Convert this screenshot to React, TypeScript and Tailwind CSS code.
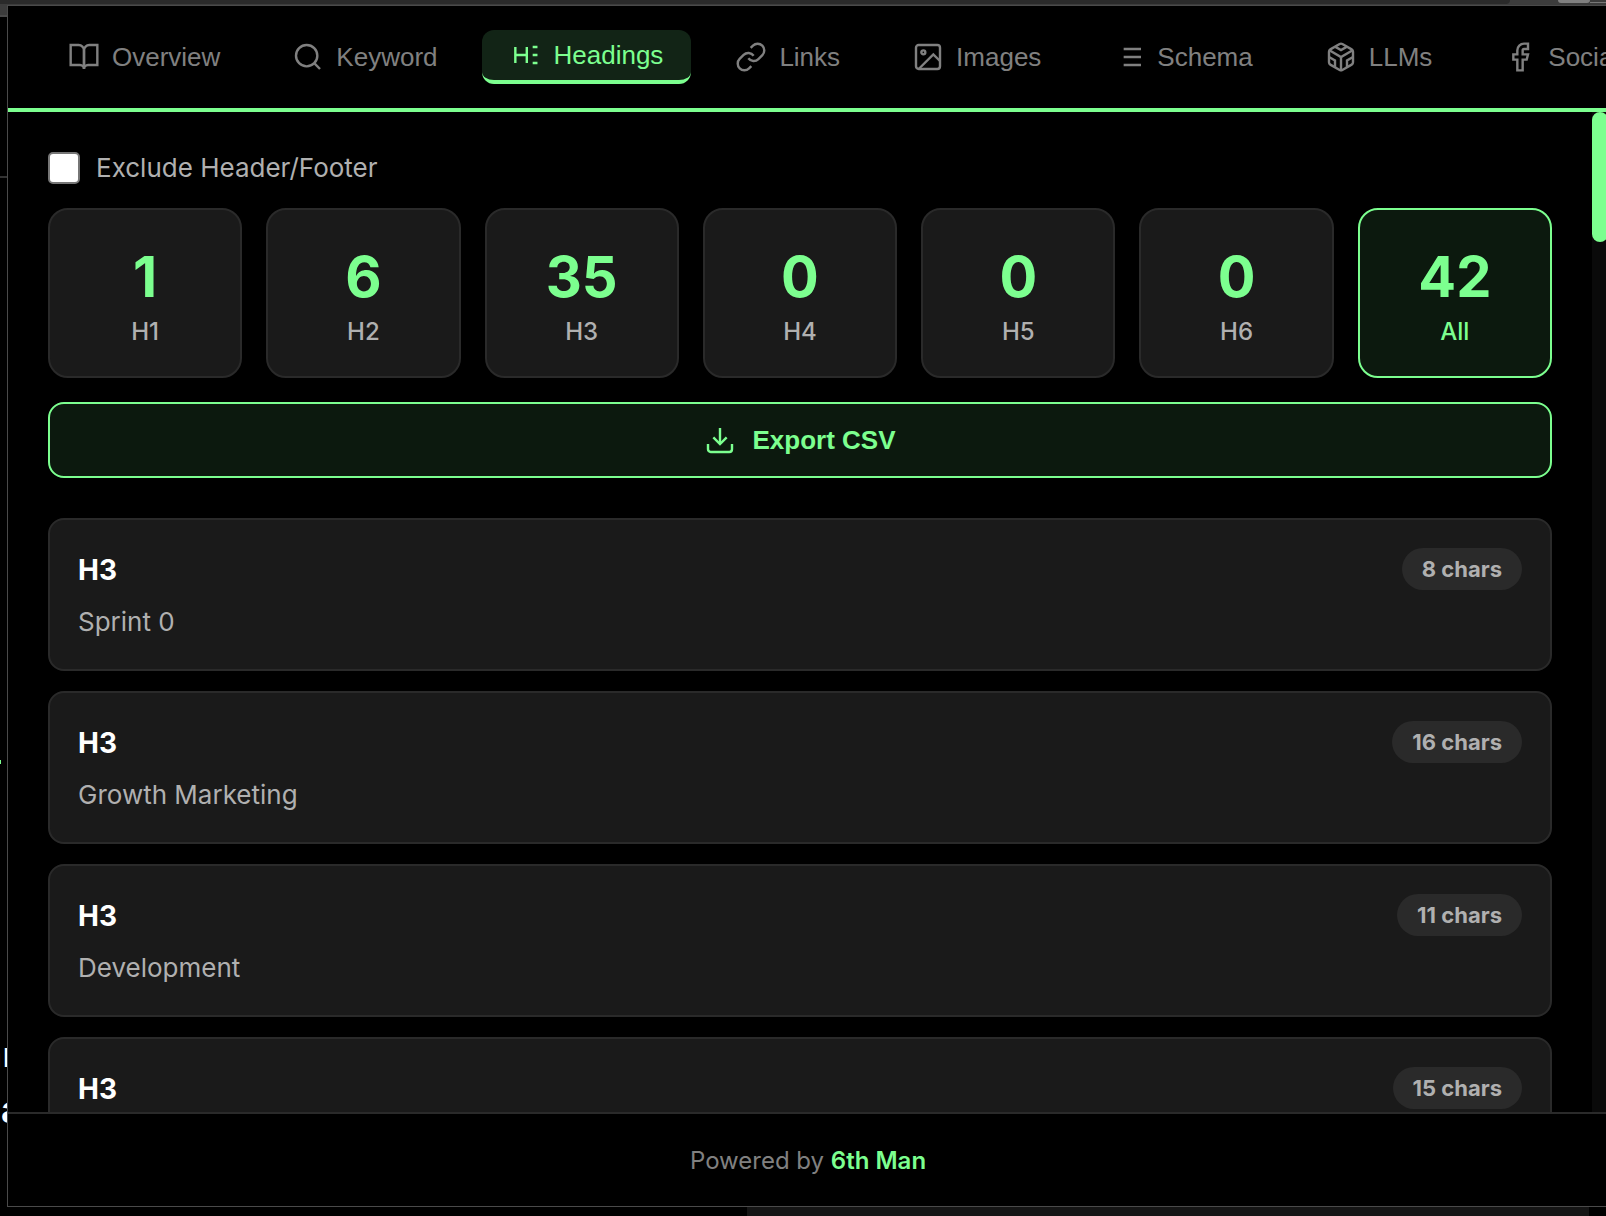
import type { ReactNode } from 'react';
import {
  FiBookOpen,
  FiCodesandbox,
  FiDownload,
  FiFacebook,
  FiImage,
  FiLink,
  FiSearch,
} from 'react-icons/fi';

const iconProps = {
  size: 32,
  strokeWidth: 1.8,
  strokeLinecap: 'butt',
  strokeLinejoin: 'miter',
  'aria-hidden': true,
  className: 'shrink-0',
} as const;

function HeadingIcon() {
  return (
    <svg width="32" height="32" viewBox="0 0 24 24" fill="none" stroke="currentColor" className="shrink-0" aria-hidden="true">
      <path strokeWidth="1.8" d="M4 6v12M12.6 6v12M4 12h8.6" />
      <path strokeWidth="2" d="M17 6h3.6M17 12h3.6M17 18h3.6" />
    </svg>
  );
}

function SchemaIcon() {
  return (
    <svg width="32" height="32" viewBox="0 0 24 24" fill="none" stroke="currentColor" strokeWidth="2" className="shrink-0" aria-hidden="true">
      <path d="M8 6h13M8 12h13M8 18h13" />
    </svg>
  );
}

const tabs: { label: string; icon: ReactNode; active?: boolean }[] = [
  { label: 'Overview', icon: <FiBookOpen {...iconProps} /> },
  { label: 'Keyword', icon: <FiSearch {...iconProps} /> },
  { label: 'Headings', icon: <HeadingIcon />, active: true },
  { label: 'Links', icon: <FiLink {...iconProps} /> },
  { label: 'Images', icon: <FiImage {...iconProps} /> },
  { label: 'Schema', icon: <SchemaIcon /> },
  { label: 'LLMs', icon: <FiCodesandbox {...iconProps} /> },
  { label: 'Social', icon: <FiFacebook {...iconProps} /> },
];

const counts = [
  { label: 'H1', value: 1 },
  { label: 'H2', value: 6 },
  { label: 'H3', value: 35 },
  { label: 'H4', value: 0 },
  { label: 'H5', value: 0 },
  { label: 'H6', value: 0 },
  { label: 'All', value: 42, active: true },
];

const headings = [
  { level: 'H3', text: 'Sprint 0', chars: 8 },
  { level: 'H3', text: 'Growth Marketing', chars: 16 },
  { level: 'H3', text: 'Development', chars: 11 },
  { level: 'H3', text: 'Product Strategy', chars: 15 },
];

function Tabs() {
  return (
    <nav className="flex h-[106px] shrink-0 items-start gap-4 overflow-hidden border-b-4 border-[#7cff8f] px-8 pt-6">
      {tabs.map((tab) => (
        <button
          key={tab.label}
          type="button"
          className={`flex h-[54px] shrink-0 items-center gap-3 rounded-xl px-7 font-['Liberation_Sans',Arial,sans-serif] text-[26px] leading-8 ${
            tab.active ? 'border-b-4 border-[#7cff8f] bg-[#122416] text-[#7cff8f]' : 'text-[#808080]'
          }`}
        >
          {tab.icon}
          {tab.label}
        </button>
      ))}
    </nav>
  );
}

function CountCards() {
  return (
    <div className="mt-6 grid grid-cols-7 gap-6">
      {counts.map((count) => (
        <button
          key={count.label}
          type="button"
          className={`flex flex-col items-center rounded-[20px] border-2 pt-8 pb-7 ${
            count.active ? 'border-[#7cff8f] bg-[#0c190e]' : 'border-[#2a2a2a] bg-[#1a1a1a]'
          }`}
        >
          <span className="text-[56px] leading-[70px] font-bold text-[#7cff8f]">{count.value}</span>
          <span
            className={`mt-1 text-2xl leading-8 font-medium ${
              count.active ? 'text-[#7cff8f]' : 'text-[#b0b0b0]'
            }`}
          >
            {count.label}
          </span>
        </button>
      ))}
    </div>
  );
}

function HeadingList() {
  return (
    <ul className="mt-10 flex flex-col gap-5">
      {headings.map((heading) => (
        <li key={heading.text} className="rounded-2xl border-2 border-[#2a2a2a] bg-[#1a1a1a] p-7">
          <div className="flex items-start justify-between">
            <span className="text-[28px] leading-[44px] font-bold text-white">{heading.level}</span>
            <span className="rounded-full bg-[#2a2a2a] px-5 text-[22px] leading-[42px] font-bold text-[#b0b0b0]">
              {heading.chars} chars
            </span>
          </div>
          <p className="mt-2.5 text-[26px] leading-[39px] text-[#b0b0b0]">{heading.text}</p>
        </li>
      ))}
    </ul>
  );
}

export default function App() {
  return (
    <div className="flex h-screen flex-col overflow-hidden bg-black font-[Inter,sans-serif]">
      {/* browser chrome above the popup */}
      <div className="flex h-[5px] shrink-0 items-start bg-[#3c3c3c]">
        <div className="h-1 w-[94%] rounded-br-full bg-[#2a2a2a]"></div>
        <div className="ml-12 h-[3px] w-8 rounded-b-full bg-[#808080]"></div>
        <div className="h-[3px] grow border-b border-[#777]"></div>
      </div>

      <div className="flex min-h-0 grow">
        {/* sliver of the page behind the popup */}
        <div className="relative w-[7px] shrink-0 overflow-hidden text-white" aria-hidden="true">
          <div className="h-3 border-b-2 border-[#4a4a4a] bg-[#3c3c3c]"></div>
          <div className="mt-[159px] h-0.5 bg-[#333]"></div>
          <span className="absolute top-[755px] left-0 h-1 w-px bg-[#7cff8f]"></span>
          <span className="absolute top-[1030px] -right-2 text-[34px] leading-10">ar</span>
          <span className="absolute top-[1084px] -right-4 text-[38px] leading-10 font-bold">a</span>
        </div>

        <div className="-mr-0.5 flex min-w-0 grow flex-col border border-r-0 border-[#4a4a4a] bg-black">
          <Tabs />

          <main className="flex min-h-0 grow overflow-hidden">
            <div className="min-w-0 grow p-10">
              <label className="flex w-fit items-center gap-4 text-[26px] leading-8 text-[#b0b0b0]">
                <input
                  type="checkbox"
                  className="size-8 appearance-none rounded-[5px] border-2 border-[#767676] bg-white checked:bg-[#7cff8f]"
                />
                Exclude Header/Footer
              </label>
              <CountCards />
              <button
                type="button"
                className="mt-6 flex h-[76px] w-full items-center justify-center gap-4 rounded-2xl border-2 border-[#7cff8f] bg-[#0c190e] font-['Liberation_Sans',Arial,sans-serif] text-[26px] leading-8 font-bold text-[#7cff8f]"
              >
                <FiDownload {...iconProps} />
                Export CSV
              </button>
              <HeadingList />
            </div>
            <div className="w-4 shrink-0 bg-[#0a0a0a]">
              <div className="h-[130px] rounded-full bg-[#7cff8f]"></div>
            </div>
          </main>

          <footer className="shrink-0 border-t-2 border-[#2a2a2a] pt-[31px] pb-[29px] text-center text-2xl leading-8 text-[#808080]">
            Powered by{' '}
            <a href="#" className="font-semibold text-[#7cff8f]">
              6th Man
            </a>
          </footer>
        </div>
      </div>

      <div className="flex h-[9px] shrink-0 justify-end pr-[17px]">
        <div className="w-[53%] bg-[#151515]"></div>
      </div>
    </div>
  );
}
